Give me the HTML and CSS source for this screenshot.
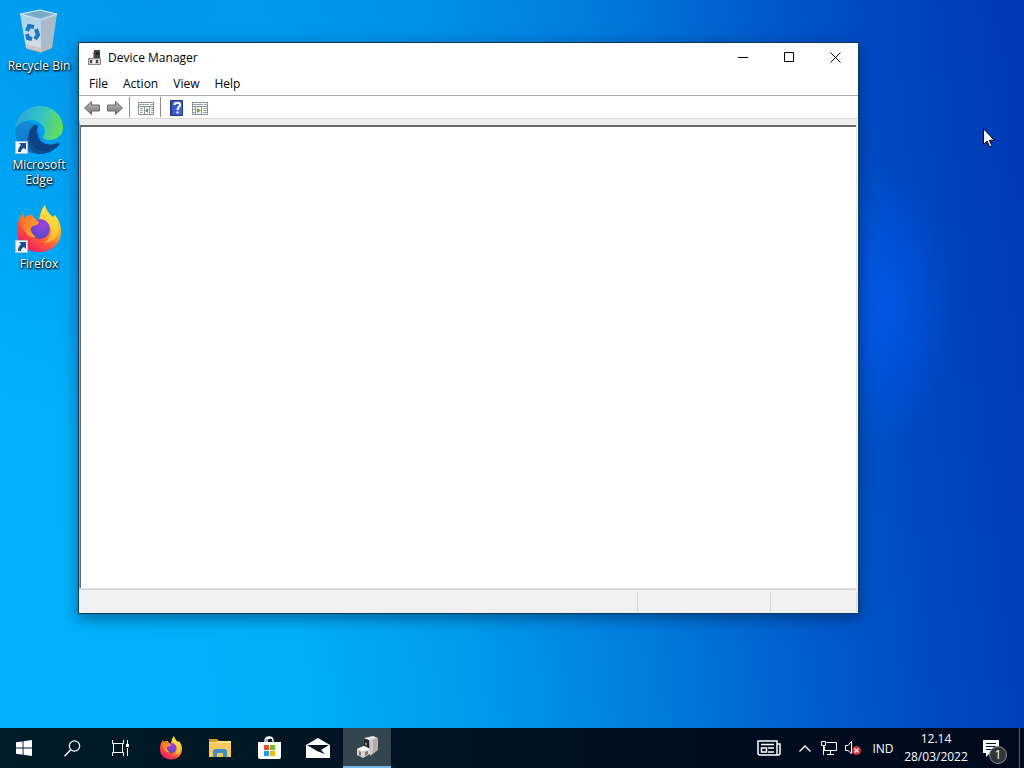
FILE: index.html
```html
<!DOCTYPE html>
<html lang="en">
<head>
<meta charset="utf-8">
<title>Device Manager</title>
<link rel="stylesheet" href="styles.css">
</head>
<body>
<svg class="defs" aria-hidden="true">
  <defs>
    <linearGradient id="ffBody" x1=".85" y1=".1" x2=".25" y2=".95"><stop offset="0" stop-color="#fff04a"/><stop offset=".35" stop-color="#ffb02c"/><stop offset=".65" stop-color="#ff5a36"/><stop offset="1" stop-color="#ee1a68"/></linearGradient>
    <radialGradient id="ffGlobe" cx=".6" cy=".3" r=".8"><stop offset="0" stop-color="#a640d8"/><stop offset=".6" stop-color="#6c46d6"/><stop offset="1" stop-color="#4b3bb5"/></radialGradient>
    <linearGradient id="ffHead" x1="0" y1="0" x2="1" y2="1"><stop offset="0" stop-color="#ff6a2c"/><stop offset="1" stop-color="#ffae2e"/></linearGradient>
    <linearGradient id="edgeTop" x1="0" y1=".4" x2="1" y2=".6"><stop offset="0" stop-color="#2aa6dc"/><stop offset=".5" stop-color="#35c3c4"/><stop offset="1" stop-color="#68e04e"/></linearGradient>
    <linearGradient id="edgeLeft" x1=".3" y1="0" x2=".6" y2="1"><stop offset="0" stop-color="#1693dd"/><stop offset="1" stop-color="#0c5cae"/></linearGradient>
    <linearGradient id="binFront" x1="0" y1="0" x2="0" y2="1"><stop offset="0" stop-color="#a9d0e8"/><stop offset="1" stop-color="#dbe2e8"/></linearGradient>
    <linearGradient id="arrowFill" x1="0" y1="0" x2="0" y2="1"><stop offset="0" stop-color="#bbb"/><stop offset="1" stop-color="#777"/></linearGradient>
    <linearGradient id="helpFill" x1="0" y1="0" x2="1" y2="0"><stop offset="0" stop-color="#23378f"/><stop offset=".2" stop-color="#3558c4"/><stop offset="1" stop-color="#4468d4"/></linearGradient>
    <symbol id="firefox" viewBox="0 0 48 48">
      <path fill="url(#ffBody)" d="M2 26C2 18 4 13 8 8l1 5c2-2 5-3 8-3 1 2 3 4 6 5 3-4 2-10 7-15 1 5 4 9 8 12l2-2c4 5 6 10 6 16 0 13-10 21-22 21S2 39 2 26z"/>
      <path fill="#ffdf42" d="M30 1c-5 5-4 10-6 14 6 0 12 4 12 12 0 4-3 9-8 11 10 0 16-7 15-16-1-9-10-11-13-21z" opacity=".6"/>
      <circle cx="25" cy="24" r="10" fill="url(#ffGlobe)"/>
      <path fill="url(#ffHead)" d="M8 8l1 5c2-2 5-3 8-3 1 3 4 5 7 7-1 3-3 3-6 4-2 1-3 3-2 5 1 3 3 4 5 6-4 1-8-1-10-4C6 22 5 14 8 8z"/>
    </symbol>
    <symbol id="shortcut" viewBox="0 0 13 13">
      <path fill="#f5f8fb" stroke="#b5c3d2" d="M.5.5h12v12H.5z"/>
      <path fill="#1b4f8c" d="M4 2h7v7L9 7c-2 1-3 2-3 4H3c0-3 1-5 3-7z"/>
    </symbol>
  </defs>
</svg>

<main class="desktop">
  <nav class="shortcuts" aria-label="Desktop">
    <button class="shortcut">
      <svg class="shortcut-icon" viewBox="0 0 48 48" aria-hidden="true">
        <path fill="#8ebcd8" d="M5 7l20-4 17 4-16 6z"/>
        <path fill="#78a9c6" d="M10 7l15-3 12 3-12 4z"/>
        <path fill="url(#binFront)" d="M5 7l21 6v32L11 41z"/>
        <path fill="#aabccb" d="M26 13l16-6-5 34-11 4z"/>
        <path fill="#c8b7b3" d="M11 37l15 4 12-4-1 4-11 5-15-4z" opacity=".6"/>
        <path fill="none" stroke="#d5eaf5" d="M5 7l20-4 17 4-16 6z"/>
        <g fill="none" stroke="#1776c5" stroke-width="4"><path d="M12 24l2-5 5 1"/><path d="M21 22l2 6-3 4"/><path d="M17 32l-4-1-1-4"/></g>
      </svg>
      <span>Recycle Bin</span>
    </button>
    <button class="shortcut">
      <svg class="shortcut-icon" viewBox="0 0 48 48" aria-hidden="true">
        <path fill="url(#edgeLeft)" d="M0 23c0 14 10 25 25 25 8 0 15-4 19-10-8 3-18 1-20-9 0-7-4-14-13-13C5 17 1 20 0 23z"/>
        <path fill="#114d91" d="M14 27c2 11 12 19 30 11-4 6-11 10-19 10C15 47 10 36 14 27z"/>
        <path fill="#0d4384" d="M18 20c-5 5-6 12-1 19 6 8 18 8 26 1 3-3 1-4-1-3-9 4-19 0-20-9-1-5 1-6 1-8-1-2-4-2-5 0z"/>
        <path fill="url(#edgeTop)" d="M0 23C2 9 12 0 25 0c14 0 23 11 23 21 0 8-6 13-13 13-5 0-8-2-7-4 3-3 2-8-1-11-7-8-21-6-27 4z"/>
        <path fill="#1080d0" d="M0 23c5-9 16-9 21-4-6 1-9 10-7 20C5 39 0 32 0 23z" opacity=".5"/>
        <svg x="0" y="35" width="13" height="13"><use href="#shortcut"/></svg>
      </svg>
      <span>Microsoft Edge</span>
    </button>
    <button class="shortcut">
      <svg class="shortcut-icon" viewBox="0 0 48 48" aria-hidden="true">
        <use href="#firefox" width="48" height="48"/>
        <svg x="0" y="35" width="13" height="13"><use href="#shortcut"/></svg>
      </svg>
      <span>Firefox</span>
    </button>
  </nav>

  <section class="window" aria-label="Device Manager">
    <header class="titlebar">
      <svg class="title-icon" width="16" height="16" viewBox="0 0 16 16" aria-hidden="true">
        <path fill="#444" d="M7 0h6v8H7z"/><path fill="#222" d="M9 2h3v3H9z"/><path fill="#999" d="M6 2h1v6H6z"/>
        <path fill="#ccc" stroke="#888" d="M1.500 8.500h12v6h-12z"/><path fill="#444" d="M3 10h2v3H3zM9 10h2v3H9z"/><path fill="#eee" d="M6 9h2v5H6z"/>
      </svg>
      <h1 class="title">Device Manager</h1>
      <button class="caption" aria-label="Minimize"><svg width="11" height="11" viewBox="0 0 11 11"><path stroke="#000" d="M0 5.500h10"/></svg></button>
      <button class="caption" aria-label="Maximize"><svg width="11" height="11" viewBox="0 0 11 11"><path fill="none" stroke="#000" d="M.5.5h9v9h-9z"/></svg></button>
      <button class="caption" aria-label="Close"><svg width="11" height="11" viewBox="0 0 11 11"><path stroke="#000" d="M.5.5l10 10M10.500.5l-10 10"/></svg></button>
    </header>
    <nav class="menubar" aria-label="Menu">
      <button class="menu">File</button><button class="menu">Action</button><button class="menu">View</button><button class="menu">Help</button>
    </nav>
    <div class="toolbar" role="toolbar">
      <button class="tool" aria-label="Back"><svg width="16" height="16" viewBox="0 0 16 16"><path fill="url(#arrowFill)" stroke="#686868" d="M.5 8L7.500 1.500V5h8v6h-8v3.500z"/></svg></button>
      <button class="tool" aria-label="Forward"><svg width="16" height="16" viewBox="0 0 16 16"><path fill="url(#arrowFill)" stroke="#686868" d="M15.500 8L8.500 1.500V5h-8v6h8v3.500z"/></svg></button>
      <span class="divider"></span>
      <button class="tool" aria-label="Show or hide console tree"><svg width="16" height="16" viewBox="0 0 16 16"><path fill="#fff" stroke="#87929b" d="M.5 2.500h15v12H.5zM.5 6.500h15M6.500 6.500v8M11.500 6.500v8"/><path stroke="#9aa5ae" d="M1 4.500h10M12 4.500h3M2 8.500h3M2 10.500h3M2 12.500h3M13 8.500h2M13 10.500h2M13 12.500h2"/><path fill="#5f9048" d="M10 8v5l-3-2.500z"/></svg></button>
      <span class="divider"></span>
      <button class="tool" aria-label="Help"><svg width="14" height="16" viewBox="0 0 14 16"><path fill="url(#helpFill)" stroke="#203484" d="M.5.5h12v15H.5z"/><path fill="none" stroke="#fff" stroke-width="2" d="M4.500 5c0-3 5.500-3 5.500 0 0 2-2.500 2-2.500 5"/><path fill="#fff" d="M6.500 11.500h2v2h-2z"/></svg></button>
      <button class="tool" aria-label="Show or hide action pane"><svg width="16" height="16" viewBox="0 0 16 16"><path fill="#fff" stroke="#87929b" d="M.5 2.500h15v12H.5zM.5 6.500h15M3.500 6.500v8M9.500 6.500v8"/><path stroke="#9aa5ae" d="M1 4.500h10M12 4.500h3M11 8.500h4M11 10.500h4M11 12.500h4M1 9.500h2M1 12.500h2"/><path fill="#65aa22" d="M5 8v5l4-2.500z"/></svg></button>
    </div>
    <div class="content"></div>
    <footer class="status"><span></span><span></span><span></span></footer>
  </section>

  <svg class="cursor" width="12" height="20" viewBox="0 0 12 20" aria-hidden="true"><path fill="#fff" stroke="#000" d="M.5.8v15.700l3.600-3.400 2.500 5.700 2.300-1-2.500-5.500h5z"/></svg>
</main>

<footer class="taskbar">
  <button class="task" aria-label="Start"><svg width="16" height="16" viewBox="0 0 16 16"><path fill="#fff" d="M0 2.300L6.600 1.400v6.200H0zM7.500 1.200L16 0v7.600H7.500zM0 8.400h6.600v6.300L0 13.800zM7.500 8.400H16V16l-8.500-1.200z"/></svg></button>
  <button class="task" aria-label="Search"><svg width="17" height="17" viewBox="0 0 17 17"><g fill="none" stroke="#fff"><circle cx="10.500" cy="6" r="5.200" stroke-width="1.200"/><path stroke-width="1.400" d="M6.800 9.800L.5 16.300"/></g></svg></button>
  <button class="task" aria-label="Task View"><svg width="17" height="16" viewBox="0 0 17 16"><path fill="none" stroke="#fff" d="M.5 0v3.500h11V0M.5 16v-3.500h11V16M1.500 4v8M10.500 4v8M15.500 0v4M15.500 8v8"/><path fill="#fff" d="M14 4h3v3h-3z"/></svg></button>
  <div class="apps">
    <button class="task" aria-label="Firefox"><svg width="24" height="24" viewBox="0 0 48 48"><use href="#firefox" width="48" height="48"/></svg></button>
    <button class="task" aria-label="File Explorer"><svg width="24" height="24" viewBox="0 0 24 24"><path fill="#d99b25" d="M1 3h8l2 2h11v5H1z"/><path fill="#f6c95c" d="M1 6h7l2-1h13v16H1z"/><path fill="#ffe08a" d="M1 6h7l2-1h13v2H1z"/><path fill="#3f8fc5" d="M5 21v-6q0-2 2-2h10q2 0 2 2v6h-4v-4H9v4z"/></svg></button>
    <button class="task" aria-label="Microsoft Store"><svg width="24" height="24" viewBox="0 0 24 24"><path fill="none" stroke="#fff" stroke-width="1.300" d="M8 7V4.500q0-3.500 4-3.500t4 3.500V7M10 7V4q0-2 3-2t3 2"/><path fill="#fff" d="M1 6h23v15q0 2-2 2H3q-2 0-2-2z"/><path fill="#e44d2d" d="M7 9h5v5H7z"/><path fill="#76b92b" d="M13 9h5v5h-5z"/><path fill="#169fe2" d="M7 15h5v5H7z"/><path fill="#f7b80a" d="M13 15h5v5h-5z"/></svg></button>
    <button class="task" aria-label="Mail"><svg width="24" height="20" viewBox="0 0 24 20"><path fill="#fff" d="M0 7L12 0l12 7v13H0z"/><path fill="#001420" d="M1 7h22l-8 5 4 4-8-3z"/></svg></button>
    <button class="task active" aria-label="Device Manager"><svg width="24" height="24" viewBox="0 0 24 24"><path fill="#e8e6e3" d="M9 3l9-2 5 2-8 3z"/><path fill="#c9c6c3" d="M14 5l9-2v12l-8 6z"/><path fill="#8b8885" d="M18 4l5-1v12l-5 4z" opacity=".4"/><path fill="#242724" d="M9 4l5 1v9l-5-2z"/><path fill="#7c837d" d="M10 7l2 1v3l-2-1z"/><path fill="#d6d3d0" d="M2 14l7-3 6 3v5l-7 4-6-3z"/><path fill="#777" d="M4 16l2 1v4l-2-1zM10 17l3-1v3l-3 2z"/><path fill="#fff" d="M2 14l7-3 6 3-7 2z"/></svg></button>
  </div>
  <div class="tray">
    <button class="tray-item" aria-label="News"><svg width="24" height="17" viewBox="0 0 24 17"><g fill="none" stroke="#fff" stroke-width="1.500"><path d="M1 1h19v14H3q-2 0-2-2zM20 4h3v9q0 2-2 2h-4M4 4.500h13M4.500 8h5v4h-5zM11 8h6M11 12h6"/></g></svg></button>
    <button class="tray-item chevron" aria-label="Show hidden icons"><svg width="12" height="7" viewBox="0 0 12 7"><path fill="none" stroke="#fff" stroke-width="1.300" d="M.5 6.500L6 1l5.500 5.500"/></svg></button>
    <button class="tray-item" aria-label="Network"><svg width="16" height="14" viewBox="0 0 16 14"><path fill="none" stroke="#fff" d="M5.500 1.500h10v8h-12v-4M9.500 9.500v4M6 13.500h7M.5.500h4v4h-4zM2.500 5v9"/></svg></button>
    <button class="tray-item" aria-label="Volume muted"><svg width="16" height="14" viewBox="0 0 16 14"><path fill="none" stroke="#fff" d="M.5 4.500H3l3.500-4v12L3 9.500H.5z"/><circle cx="11.500" cy="9.500" r="4.500" fill="#d72f37"/><path stroke="#fff" stroke-width="1.200" d="M9.500 7.500l4 4M13.500 7.500l-4 4"/></svg></button>
    <button class="tray-item language">IND</button>
    <button class="clock"><time>12.14</time><time>28/03/2022</time></button>
    <button class="tray-item notices" aria-label="Notifications"><svg width="18" height="17" viewBox="0 0 18 17"><path fill="#fff" d="M0 0h16v13H7l-4 4v-4H0z"/><path stroke="#001020" d="M3 3.500h10M3 6.500h10M3 9.500h7"/></svg><span class="count">1</span></button>
    <button class="show-desktop" aria-label="Show desktop"></button>
  </div>
</footer>
</body>
</html>
```
FILE: styles.css
```css
* { box-sizing: border-box; }
body {
  margin: 0;
  height: 100vh;
  display: flex;
  flex-direction: column;
  overflow: hidden;
  font: 12px/15px "Open Sans", "Noto Sans", sans-serif;
  color: #000;
}
button {
  margin: 0;
  padding: 0;
  border: 0;
  background: none;
  font: inherit;
  color: inherit;
}
svg { display: block; flex: none; }
.defs { position: absolute; width: 0; height: 0; }

.desktop {
  position: relative;
  flex: 1;
  min-height: 0;
  background:
    radial-gradient(ellipse 7% 20% at 86% 42%, rgba(0, 92, 240, .75), rgba(0, 92, 240, 0)),
    radial-gradient(ellipse 60% 60% at 15% 0%, rgba(0, 130, 226, .55), rgba(0, 130, 226, 0)),
    linear-gradient(84deg, #00b2fc 0%, #00aff6 28%, #009eec 42%, #0080de 58%, #0060ce 73%, #0048c2 86%, #0038b4 100%);
}
.shortcuts {
  width: 78px;
  padding-top: 7px;
  display: grid;
  grid-auto-rows: 99px;
}
.shortcut {
  display: flex;
  flex-direction: column;
  align-items: center;
  gap: 3px;
  padding: 0 4px;
  color: #fff;
  text-shadow: 0 1px 2px #000, 1px 1px 2px #000;
}
.shortcut-icon { width: 48px; height: 48px; }

.window {
  position: absolute;
  inset: 42px 165px 114px 78px;
  display: flex;
  flex-direction: column;
  background: #fff;
  border: 1px solid #0b3c60;
  box-shadow: 0 4px 14px rgba(0, 20, 60, .5);
}
.titlebar {
  display: flex;
  align-items: center;
  height: 29px;
  padding-left: 8px;
}
.title { flex: 1; margin: 0 0 0 5px; font-size: 12px; font-weight: 400; }
.caption { width: 46px; height: 29px; display: grid; place-items: center; }
.menubar { display: flex; height: 24px; padding: 0 2px 1px; border-bottom: 1px solid #aaa; }
.menu { padding: 0 7px 0 8px; }
.toolbar {
  display: flex;
  align-items: center;
  height: 23px;
  padding-left: 1px;
  border-bottom: 1px solid #d8d8d8;
}
.tool { width: 23px; height: 22px; display: grid; place-items: center; }
.tool svg { margin-top: 2px; }
.divider { width: 1px; height: 20px; margin: 0 4px 0 3px; background: #8c8c8c; }
.content {
  flex: 1;
  margin-right: 1px;
  border-top: 6px solid #f0f0f0;
  border-right: 1px solid #e3e3e3;
  border-bottom: 1px solid #e3e3e3;
  border-left: 1px solid #a0a0a0;
  box-shadow: inset 1px 2px #696969;
}
.status {
  display: grid;
  grid-template-columns: 1fr 133px 86px;
  height: 24px;
  padding: 2px 1px 1px 0;
  background: #f0f0f0;
  border-top: 1px solid #d7d7d7;
}
.status span { border-right: 1px solid #d9d9d9; }
.cursor { position: absolute; top: 128px; left: 983px; }

.taskbar {
  display: flex;
  height: 40px;
  color: #fff;
  background: linear-gradient(90deg, #001c28, #001422 40%, #000c20 75%, #000a1c);
}
.task { width: 48px; height: 40px; display: grid; place-items: center; }
.apps { display: flex; gap: 1px; margin-left: 3px; }
.active { background: #344550; border-bottom: 2px solid #76b9ed; }
.tray { display: flex; margin-left: auto; }
.tray-item { width: 24px; display: grid; place-items: center; }
.chevron { margin-left: 12px; }
.language { width: 36px; }
.clock {
  width: 70px;
  display: grid;
  align-content: center;
  line-height: 18px;
  text-align: center;
}
.notices { position: relative; width: 48px; padding-right: 6px; }
.count {
  position: absolute;
  right: 12px;
  bottom: 4px;
  width: 18px;
  height: 18px;
  border: 1px solid #8b9198;
  border-radius: 50%;
  background: #30363e;
  line-height: 16px;
}
.show-desktop { width: 5px; border-left: 1px solid #56606c; }
```
